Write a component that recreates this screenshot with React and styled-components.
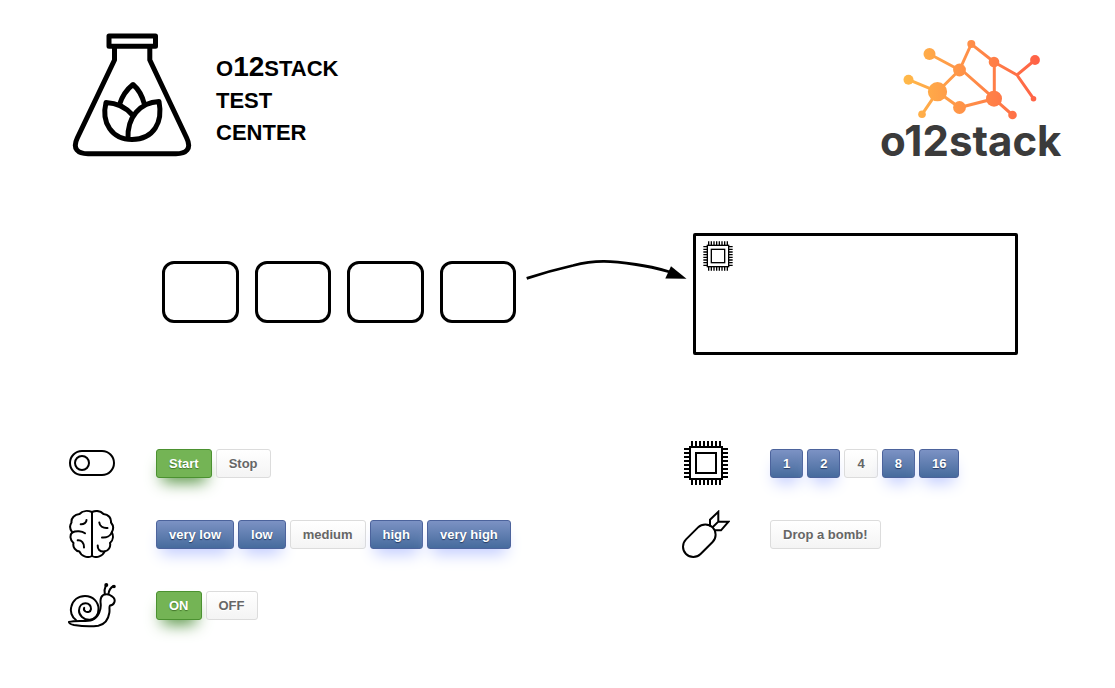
import React from "react";
import styled, { createGlobalStyle, css } from "styled-components";

const GlobalStyle = createGlobalStyle`
  *, *::before, *::after { box-sizing: border-box; }
  body {
    margin: 0;
    background: #fff;
    color: #000;
    font-family: "Liberation Sans", Arial, sans-serif;
  }
`;

const Page = styled.div`
  padding: 32px 53px 56px 68px;
`;

const Header = styled.header`
  display: flex;
  justify-content: space-between;
  align-items: flex-start;
  height: 128px;
`;

const Brand = styled.div`
  display: flex;
  align-items: center;
  gap: 20px;
`;

const FlaskIcon = styled.svg`
  display: block;
  width: 128px;
  height: 128px;
`;

const Title = styled.h1`
  margin: 10px 0 0;
  font-size: 22px;
  line-height: 32px;
  font-weight: bold;
`;

const TitleLine = styled.span`
  display: block;
`;

const TitleNumber = styled.span`
  font-size: 28px;
  line-height: 24px;
`;

const Logo = styled.div`
  width: 182px;
  padding-top: 4px;
`;

const LogoGraph = styled.svg`
  display: block;
  width: 182px;
  height: 86px;
`;

const LogoName = styled.div`
  font-family: Inter, "Open Sans", sans-serif;
  font-weight: 700;
  font-size: 42px;
  line-height: 38px;
  color: #3b3b3b;
  white-space: nowrap;
`;

const Diagram = styled.section`
  display: grid;
  grid-template-columns: 354fr 177fr 325fr;
  align-items: stretch;
  margin-top: 73px;
  padding: 0 44px 0 94px;
`;

const Queue = styled.div`
  display: flex;
  align-items: center;
  gap: 16px;
  padding-bottom: 4px;
`;

const Slot = styled.div`
  flex: 1;
  height: 62px;
  border: 3px solid #000;
  border-radius: 12px;
`;

const Arrow = styled.svg`
  display: block;
  width: 100%;
  height: 122px;
`;

const Machine = styled.div`
  height: 122px;
  padding: 4px 6px;
  border: 3px solid #000;
  border-radius: 2px;
`;

const Controls = styled.main`
  display: grid;
  grid-template-columns: 614fr 380fr;
  align-items: start;
  margin-top: 84px;
`;

const ControlList = styled.div`
  display: flex;
  flex-direction: column;
  gap: 23px;
`;

const ControlRow = styled.div`
  display: flex;
  align-items: center;
  gap: 40px;
`;

const Buttons = styled.div`
  display: flex;
  gap: 4px;
`;

const Icon = styled.svg`
  display: block;
  flex: none;
  width: ${(p) => p.$size || 48}px;
  height: ${(p) => p.$size || 48}px;
  fill: none;
  stroke: #000;
  stroke-width: ${(p) => p.$stroke || 2};
  stroke-linecap: ${(p) => (p.$square ? "butt" : "round")};
  stroke-linejoin: ${(p) => (p.$square ? "miter" : "round")};
`;

const tones = {
  plain: css`
    color: #666;
    border-color: #dcdcdc;
    background: linear-gradient(#fff, #f4f4f4);
    text-shadow: 0 1px 0 #fff;
  `,
  green: css`
    color: #fff;
    border-color: #4b9130;
    background: #74b455;
    text-shadow: 0 1px 1px #43752b;
    box-shadow: 0 10px 16px -6px #4f8f3b;
  `,
  blue: css`
    color: #fff;
    border-color: #4c639c;
    background: linear-gradient(#7c92c4, #466b9d);
    text-shadow: 0 1px 1px #243a60;
    box-shadow: 0 10px 16px -5px #bfcaff;
  `,
};

const Button = styled.button`
  height: 29px;
  padding: 0 12px;
  border: 1px solid;
  border-radius: 3px;
  font: bold 13px/27px "Liberation Sans", Arial, sans-serif;
  white-space: nowrap;
  cursor: pointer;
  ${(p) => tones[p.$tone]}
`;

const pins = [10, 14, 18, 22, 26, 30, 34, 38];

function ChipIcon({ size, stroke }) {
  return (
    <Icon viewBox="0 0 48 48" $size={size} $stroke={stroke} $square aria-hidden="true">
      <rect x="8" y="8" width="32" height="32" />
      <rect x="14" y="14" width="20" height="20" />
      {pins.map((n) => (
        <path key={n} d={`M${n} 2v6M${n} 40v6M2 ${n}h6M40 ${n}h6`} />
      ))}
    </Icon>
  );
}

function ToggleIcon() {
  return (
    <Icon viewBox="0 0 48 48" aria-hidden="true">
      <rect x="2" y="12" width="44" height="24" rx="12" />
      <circle cx="14" cy="24" r="7" />
    </Icon>
  );
}

function BrainIcon() {
  return (
    <Icon viewBox="0 0 48 48" aria-hidden="true">
      <path d="M24 2V46" />
      <path d="M24 2C20 .5 14.500 .5 11.500 4C6.500 4.500 3 8 3.500 12.500C1.500 15.500 2 19.500 4.300 22.300C1.500 25 2 30 5.500 33C4.500 37 7.500 41 11.500 41.500C13 46 19.500 48.500 24 46" />
      <path d="M24 2C28 .5 32.500 .5 35.500 4C40.500 4.500 43.500 8 43 12.500C45.500 15.500 45.500 19.500 43.800 22.300C45.500 25.500 45.500 30 42 33C43 37 40.500 41 36.500 41.500C35 46 28.500 48.500 24 46" />
      <path d="M18.500 10C18.500 12.500 16 14.500 12.700 14.300M4.300 22.500C8 20.500 14 21 17 23.300M9.700 30.300C13.500 30 16.300 33 16 37.500" />
      <path d="M31.300 12.500C31.500 16 35 18.500 39.500 18M43.800 22.300C42.500 26 38.500 28 34 27.500M29.700 35.500C29.500 39 31.500 42 36.500 41.500" />
    </Icon>
  );
}

function SnailIcon() {
  return (
    <Icon viewBox="0 0 48 48" aria-hidden="true">
      <path d="M8 39C3.500 36 2 30 3.200 26C5 19 10.500 15 17 15C25 15 30.500 21 30.500 28C30.500 34 28 37.500 22 38.800C15.500 39.200 10.800 34 11 29.500C11.200 25 14 22.300 17.500 22.300C21 22.300 23.300 25 23 28C22.600 31 19.500 31.700 17.500 30.500C16 29.500 15.600 28.200 16.200 26.900" />
      <path d="M.9 41C8 38.800 18 41 24 39C31 36 33.200 28 32.700 23C32 18 33 13.200 38.500 13.200C42.500 13 43.500 15.200 45.700 16.800C47.800 19.500 46.300 24 42 24.600C40.800 25.500 42 28.500 41.300 32C40.200 39 36.500 43.500 30.300 44.700C22 46 12 45 6 44C2.500 43.300 1 42.500 .9 41Z" />
      <path d="M36.800 13C36 9.500 36.700 7 38 4M40.500 13C41 9 42.500 6.500 45.500 5" />
      <circle cx="38.300" cy="4" r="1" fill="#000" />
      <circle cx="46" cy="5.500" r=".8" fill="#000" />
    </Icon>
  );
}

function BombIcon() {
  return (
    <Icon viewBox="0 0 48 48" $square aria-hidden="true">
      <rect x="-10.300" y="-10.300" width="37.600" height="20.600" rx="10.300" transform="translate(11.300 36.700) rotate(-45)" />
      <path d="M28 16.500V9.700L36.300 1.800V11.700L30.300 17.500M36.300 11.700H46.500L39 20.300H32" />
    </Icon>
  );
}

function Flask() {
  return (
    <FlaskIcon viewBox="68 32 128 128" fill="none" stroke="#000" strokeWidth="5" strokeLinejoin="round" aria-hidden="true">
      <rect x="109" y="36" width="46.500" height="10.300" />
      <path d="M114.500 47V60L77.300 138C72 149 78 153.700 88 153.700H176C186 153.700 192 149 186.700 138L149.800 60V47" />
      <path d="M119.500 104.500C122 96.500 126 90 133 84.500C139.500 90 142.500 96.500 144.500 104.500" />
      <path d="M132.500 115C126 107.500 117 103 106 102.500C101 123 112 139.500 132 139.500C154 139.500 163 122 159 101.500C140 102.500 127 117 128 139" />
    </FlaskIcon>
  );
}

const nodes = [
  [929.5, 54, 6], [908.5, 79.7, 5], [937.5, 91.7, 9.6], [922, 114.3, 3.8],
  [959.5, 70, 6.4], [971.3, 44, 4], [994, 62, 5.3], [959.5, 107.5, 6.4],
  [994, 98.7, 8], [1035, 60, 4.9], [1033.5, 98.7, 2.8], [1012.5, 115, 4.3],
];

function O12Logo() {
  return (
    <Logo>
      <LogoGraph viewBox="880 36 182 86" aria-hidden="true">
        <defs>
          <linearGradient id="glow" gradientUnits="userSpaceOnUse" x1="903" y1="0" x2="1040" y2="0">
            <stop offset="0" stopColor="#ffba49" />
            <stop offset="1" stopColor="#ff6046" />
          </linearGradient>
        </defs>
        <path
          fill="none"
          stroke="url(#glow)"
          strokeWidth="3"
          d="M929.500 54L959.500 70L971.300 44L994 62L1017 75L1035 60M1017 75L1033.500 98.700M908.500 79.700L937.500 91.700L922 114.300M959.500 70L937.500 91.700L959.500 107.500L994 98.700L1012.500 115M994.300 62V98.700L959.500 68"
        />
        <g fill="url(#glow)">
          {nodes.map(([x, y, r]) => (
            <circle key={`${x}-${y}`} cx={x} cy={y} r={r} />
          ))}
        </g>
      </LogoGraph>
      <LogoName>o12stack</LogoName>
    </Logo>
  );
}

function Control({ label, icon, options }) {
  return (
    <ControlRow role="group" aria-label={label}>
      {icon}
      <Buttons>
        {options.map(([text, tone]) => (
          <Button key={text} type="button" $tone={tone}>
            {text}
          </Button>
        ))}
      </Buttons>
    </ControlRow>
  );
}

export default function App() {
  return (
    <>
      <GlobalStyle />
      <Page>
        <Header>
          <Brand>
            <Flask />
            <Title>
              <TitleLine>O<TitleNumber>12</TitleNumber>STACK</TitleLine>
              <TitleLine>TEST</TitleLine>
              <TitleLine>CENTER</TitleLine>
            </Title>
          </Brand>
          <O12Logo />
        </Header>

        <Diagram>
          <Queue>
            <Slot />
            <Slot />
            <Slot />
            <Slot />
          </Queue>
          <Arrow viewBox="516 233 177 122" aria-hidden="true">
            <path d="M526.700 278.400Q549 271 573 265.500C596 259.500 612 261 636 264.500C648 266 658 268.500 670 272" fill="none" stroke="#000" strokeWidth="2.800" />
            <path d="M671 266.300L665.300 278.600L686.500 278.800Z" />
          </Arrow>
          <Machine>
            <ChipIcon size={32} />
          </Machine>
        </Diagram>

        <Controls>
          <ControlList>
            <Control label="Power" icon={<ToggleIcon />} options={[["Start", "green"], ["Stop", "plain"]]} />
            <Control
              label="Complexity"
              icon={<BrainIcon />}
              options={[["very low", "blue"], ["low", "blue"], ["medium", "plain"], ["high", "blue"], ["very high", "blue"]]}
            />
            <Control label="Slow mode" icon={<SnailIcon />} options={[["ON", "green"], ["OFF", "plain"]]} />
          </ControlList>
          <ControlList>
            <Control
              label="Processors"
              icon={<ChipIcon />}
              options={[["1", "blue"], ["2", "blue"], ["4", "plain"], ["8", "blue"], ["16", "blue"]]}
            />
            <Control label="Bomb" icon={<BombIcon />} options={[["Drop a bomb!", "plain"]]} />
          </ControlList>
        </Controls>
      </Page>
    </>
  );
}
